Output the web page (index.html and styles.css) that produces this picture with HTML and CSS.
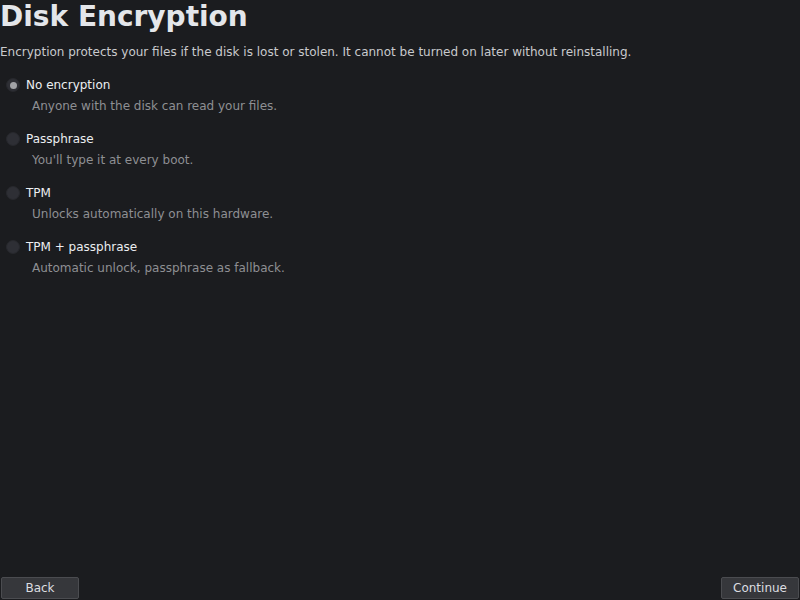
FILE: index.html
```html
<!DOCTYPE html>
<html lang="en">
<head>
    <meta charset="UTF-8">
    <title>Disk Encryption</title>
    <link rel="stylesheet" href="styles.css">
</head>
<body>
    <main class="page">
        <h1 class="title">Disk Encryption</h1>
        <p class="intro">Encryption protects your files if the disk is lost or stolen. It cannot be turned on later without reinstalling.</p>

        <div class="options">
            <label class="option">
                <span class="option-row">
                    <input type="radio" name="enc" checked>
                    <span class="option-label">No encryption</span>
                </span>
                <span class="option-desc">Anyone with the disk can read your files.</span>
            </label>
            <label class="option">
                <span class="option-row">
                    <input type="radio" name="enc">
                    <span class="option-label">Passphrase</span>
                </span>
                <span class="option-desc">You'll type it at every boot.</span>
            </label>
            <label class="option">
                <span class="option-row">
                    <input type="radio" name="enc">
                    <span class="option-label">TPM</span>
                </span>
                <span class="option-desc">Unlocks automatically on this hardware.</span>
            </label>
            <label class="option">
                <span class="option-row">
                    <input type="radio" name="enc">
                    <span class="option-label">TPM + passphrase</span>
                </span>
                <span class="option-desc">Automatic unlock, passphrase as fallback.</span>
            </label>
        </div>

        <div class="nav">
            <button class="nav-btn">Back</button>
            <button class="nav-btn">Continue</button>
        </div>
    </main>
</body>
</html>
```

FILE: styles.css
```css
html, body {
    margin: 0;
    padding: 0;
    height: 100%;
}

body {
    background-color: #1b1c1f;
    color: #e6e7ea;
    font-family: "DejaVu Sans", sans-serif;
    font-size: 12px;
}

.page {
    display: flex;
    flex-direction: column;
    height: 100vh;
    box-sizing: border-box;
}

.title {
    margin: 1px 0 0 0;
    font-size: 28px;
    font-weight: bold;
    line-height: 32px;
    color: #e4e6ea;
}

.intro {
    margin: 12px 0 0 0;
    line-height: 14px;
    color: #c9cacd;
}

.options {
    display: flex;
    flex-direction: column;
    margin-top: 16px;
}

.option {
    display: flex;
    flex-direction: column;
    height: 54px;
    cursor: pointer;
}

.option-row {
    display: flex;
    align-items: center;
    height: 20px;
}

.option input {
    appearance: none;
    -webkit-appearance: none;
    width: 14px;
    height: 14px;
    margin: 0 6px 0 6px;
    border-radius: 50%;
    border: 1px solid #27282d;
    background: #2e2f35;
    box-sizing: border-box;
    display: grid;
    place-items: center;
}

.option input:checked::after {
    content: "";
    width: 7px;
    height: 7px;
    border-radius: 50%;
    background: #a2a3a7;
}

.option-label {
    color: #eceef1;
    line-height: 14px;
}

.option-desc {
    margin: 4px 0 0 32px;
    color: #8e8f93;
    line-height: 14px;
}

.nav {
    margin-top: auto;
    display: flex;
    justify-content: space-between;
    padding: 0 1px 1px 1px;
}

.nav-btn {
    width: 78px;
    height: 22px;
    background: #36373b;
    border: 1px solid #4b4c50;
    border-radius: 2px;
    color: #dcdde0;
    font-family: "DejaVu Sans", sans-serif;
    font-size: 12px;
    padding: 0;
}
```
